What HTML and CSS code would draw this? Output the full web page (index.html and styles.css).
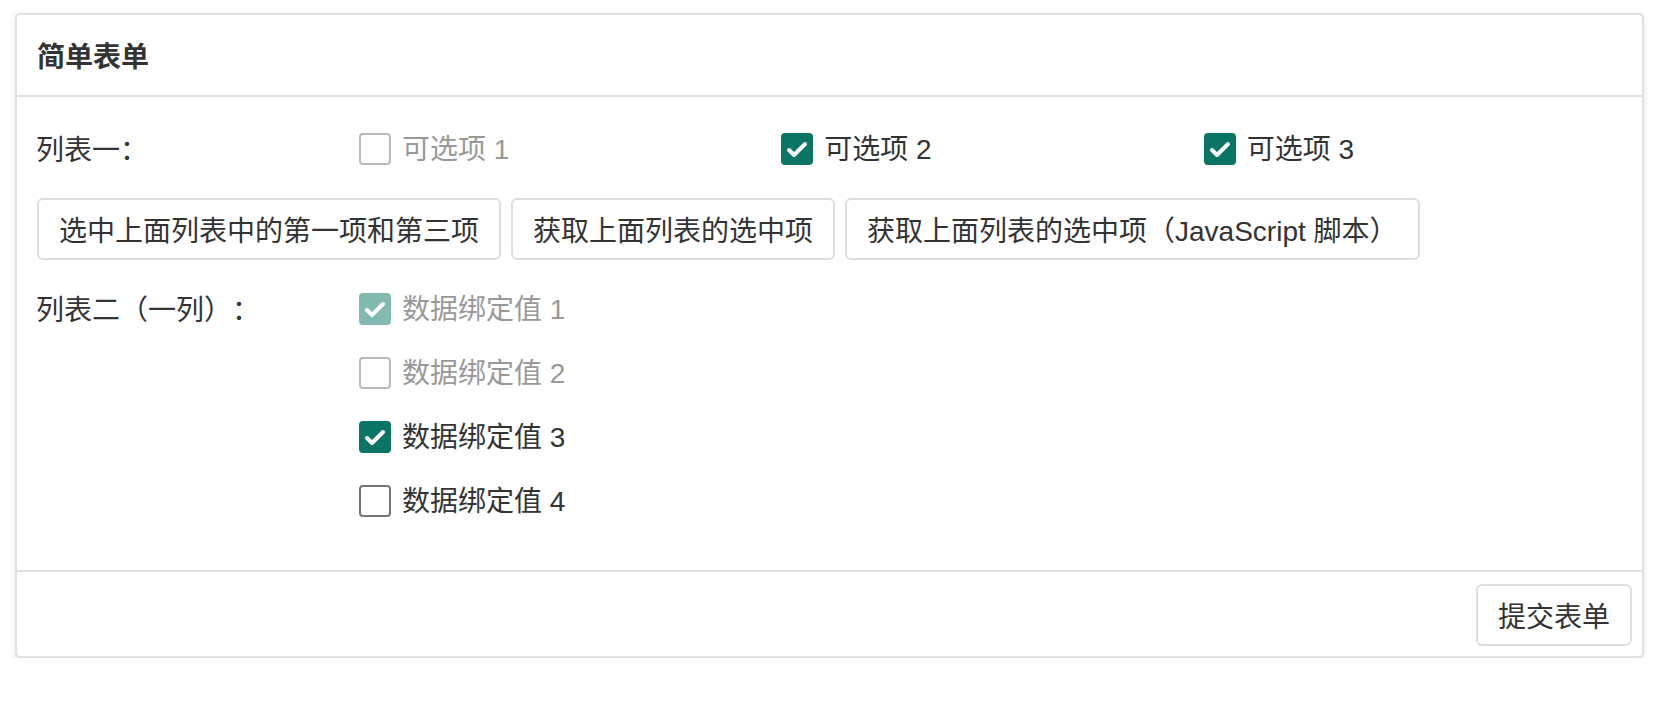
FILE: index.html
```html
<!DOCTYPE html>
<html lang="zh-CN">
<head>
<meta charset="utf-8">
<title>简单表单</title>
<link rel="stylesheet" href="styles.css">
</head>
<body>
<div class="panel">
  <div class="panel-header">简单表单</div>
  <div class="panel-body">
    <div class="form-row">
      <div class="label">列表一：</div>
      <div class="field cols3">
        <label class="cb disabled"><span class="box"></span><span>可选项 1</span></label>
        <label class="cb"><span class="box checked"><svg viewBox="0 0 32 32"><polyline points="8,17 13,22 24,11"/></svg></span><span>可选项 2</span></label>
        <label class="cb"><span class="box checked"><svg viewBox="0 0 32 32"><polyline points="8,17 13,22 24,11"/></svg></span><span>可选项 3</span></label>
      </div>
    </div>
    <div class="form-row buttons">
      <button class="btn">选中上面列表中的第一项和第三项</button>
      <button class="btn">获取上面列表的选中项</button>
      <button class="btn">获取上面列表的选中项（JavaScript 脚本）</button>
    </div>
    <div class="form-row">
      <div class="label">列表二（一列）：</div>
      <div class="field cols1">
        <label class="cb disabled"><span class="box checked"><svg viewBox="0 0 32 32"><polyline points="8,17 13,22 24,11"/></svg></span><span>数据绑定值 1</span></label>
        <label class="cb disabled"><span class="box"></span><span>数据绑定值 2</span></label>
        <label class="cb"><span class="box checked"><svg viewBox="0 0 32 32"><polyline points="8,17 13,22 24,11"/></svg></span><span>数据绑定值 3</span></label>
        <label class="cb"><span class="box"></span><span>数据绑定值 4</span></label>
      </div>
    </div>
  </div>
  <div class="panel-footer">
    <button class="btn">提交表单</button>
  </div>
</div>
</body>
</html>
```
FILE: styles.css
```css
html, body {
  margin: 0;
  padding: 0;
  background: #fff;
}
body {
  font-family: "Liberation Sans", "Noto Sans CJK SC", sans-serif;
  font-size: 28px;
  color: #333;
  padding: 13px 0 0 15px;
  text-spacing-trim: space-all;
}
.panel {
  width: 1629px;
  box-sizing: border-box;
  border: 2px solid #e0e0e0;
  border-radius: 5px;
  background: #fff;
  box-shadow: 0 2px 6px rgba(0, 0, 0, 0.1);
}
.panel-header {
  height: 80px;
  display: flex;
  align-items: center;
  padding: 0 20px;
  font-weight: bold;
  border-bottom: 2px solid #e0e0e0;
}
.panel-body {
  padding: 20px 16px 21px 19px;
}
.form-row {
  display: grid;
  grid-template-columns: 323px 1fr;
  margin-bottom: 16px;
}
.form-row:last-child {
  margin-bottom: 0;
  padding-bottom: 16px;
}
.label {
  height: 64px;
  line-height: 67px;
  white-space: nowrap;
}
.field.cols3 {
  display: grid;
  grid-template-columns: repeat(3, 1fr);
}
.field.cols1 {
  display: flex;
  flex-direction: column;
}
.cb {
  height: 64px;
  display: flex;
  align-items: center;
  gap: 11px;
  white-space: nowrap;
}
.cb > span:last-child {
  line-height: 32px;
  margin-top: 1px;
}
.cb.disabled {
  opacity: 0.5;
}
.box {
  width: 32px;
  height: 32px;
  box-sizing: border-box;
  border: 2px solid #767676;
  border-radius: 4px;
  background: #fff;
  flex: none;
  display: block;
}
.box.checked {
  background: #0b7565;
  border-color: #0b7565;
}
.box svg {
  display: block;
  width: 32px;
  height: 32px;
  margin: -2px;
}
.box svg polyline {
  fill: none;
  stroke: #fff;
  stroke-width: 4;
  stroke-linecap: round;
  stroke-linejoin: round;
}
.form-row.buttons {
  display: flex;
  align-items: center;
  gap: 10px;
  height: 64px;
  padding-left: 1px;
}
.btn {
  font-family: inherit;
  font-size: 28px;
  color: #333;
  height: 62px;
  padding: 0 20px;
  background: #fff;
  border: 2px solid #dedede;
  border-radius: 6px;
  white-space: nowrap;
  cursor: pointer;
  text-spacing-trim: space-all;
}
.panel-footer {
  border-top: 2px solid #e0e0e0;
  padding: 12px 10px 10px;
  display: flex;
  justify-content: flex-end;
}
```
